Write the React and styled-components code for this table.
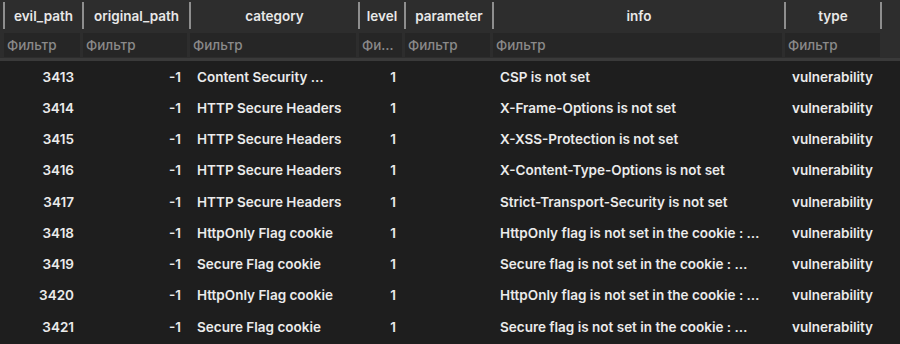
import React from 'react';
import styled, { createGlobalStyle } from 'styled-components';

const GlobalStyle = createGlobalStyle`
  html, body { margin: 0; padding: 0; background: #1e1e1e; }
  body { font-family: Inter, "Liberation Sans", "Noto Sans", sans-serif; }
  * { box-sizing: border-box; }
`;

const columns = [
  { key: 'evil', title: 'evil_path', width: 79, align: 'right' },
  { key: 'orig', title: 'original_path', width: 107, align: 'right' },
  { key: 'cat', title: 'category', width: 169, align: 'left' },
  { key: 'level', title: 'level', width: 46, align: 'right', filter: 'Фи…' },
  { key: 'param', title: 'parameter', width: 88, align: 'left' },
  { key: 'info', title: 'info', width: 292, align: 'left' },
  { key: 'type', title: 'type', width: 98, align: 'left' },
];

const template = columns.map((c) => `${c.width}px`).join(' ') + ' 1fr';

const rows = [
  [3413, -1, 'Content Security …', 1, '', 'CSP is not set', 'vulnerability'],
  [3414, -1, 'HTTP Secure Headers', 1, '', 'X-Frame-Options is not set', 'vulnerability'],
  [3415, -1, 'HTTP Secure Headers', 1, '', 'X-XSS-Protection is not set', 'vulnerability'],
  [3416, -1, 'HTTP Secure Headers', 1, '', 'X-Content-Type-Options is not set', 'vulnerability'],
  [3417, -1, 'HTTP Secure Headers', 1, '', 'Strict-Transport-Security is not set', 'vulnerability'],
  [3418, -1, 'HttpOnly Flag cookie', 1, '', 'HttpOnly flag is not set in the cookie : …', 'vulnerability'],
  [3419, -1, 'Secure Flag cookie', 1, '', 'Secure flag is not set in the cookie : …', 'vulnerability'],
  [3420, -1, 'HttpOnly Flag cookie', 1, '', 'HttpOnly flag is not set in the cookie : …', 'vulnerability'],
  [3421, -1, 'Secure Flag cookie', 1, '', 'Secure flag is not set in the cookie : …', 'vulnerability'],
];

const Table = styled.div`
  width: 900px;
  height: 344px;
  overflow: hidden;
  background: #1e1e1e;
  display: flex;
  flex-direction: column;
`;

const HeaderRow = styled.div`
  display: grid;
  grid-template-columns: ${template};
  height: 32px;
  padding: 2px 0 3px 3px;
  background: #2d2d2d;
`;

const HeaderCell = styled.div`
  display: flex;
  align-items: center;
  justify-content: center;
  border-left: 2px solid #8e8e8e;
  ${(p) => (p.$last ? 'border-right: 2px solid #8e8e8e;' : '')}
  color: #e8e8e8;
  font-size: 13.5px;
  font-weight: 600;
  white-space: nowrap;
`;

const FilterRow = styled.div`
  display: grid;
  grid-template-columns: ${template};
  height: 29px;
  padding: 1px 0 1px 3px;
  background: #2d2d2d;
  border-bottom: 3px solid #3a3a3a;
`;

const FilterBox = styled.div`
  margin: 0 2px 0 1px;
  background: #262626;
  color: #8a8a8a;
  font-size: 13.5px;
  font-weight: 500;
  display: flex;
  align-items: center;
  padding: 0 3px;
  white-space: nowrap;
  overflow: hidden;
`;

const Body = styled.div`
  display: flex;
  flex-direction: column;
`;

const DataRow = styled.div`
  display: grid;
  grid-template-columns: ${template};
  height: 31.25px;
  align-items: center;
  padding-left: 3px;
`;

const Cell = styled.div`
  padding: 0 ${(p) => (p.$align === 'right' ? '8px 0 0' : '0 0 8px')};
  text-align: ${(p) => p.$align};
  color: #ebebeb;
  font-size: 13.5px;
  font-weight: 600;
  white-space: nowrap;
  overflow: hidden;
`;

export default function App() {
  return (
    <>
      <GlobalStyle />
      <Table>
        <HeaderRow>
          {columns.map((c, i) => (
            <HeaderCell key={c.key} $last={i === columns.length - 1}>
              {c.title}
            </HeaderCell>
          ))}
          <div />
        </HeaderRow>
        <FilterRow>
          {columns.map((c) => (
            <FilterBox key={c.key}>{c.filter || 'Фильтр'}</FilterBox>
          ))}
          <div />
        </FilterRow>
        <Body>
          {rows.map((r) => (
            <DataRow key={r[0]}>
              {r.map((v, i) => (
                <Cell key={i} $align={columns[i].align}>
                  {v}
                </Cell>
              ))}
              <div />
            </DataRow>
          ))}
        </Body>
      </Table>
    </>
  );
}
